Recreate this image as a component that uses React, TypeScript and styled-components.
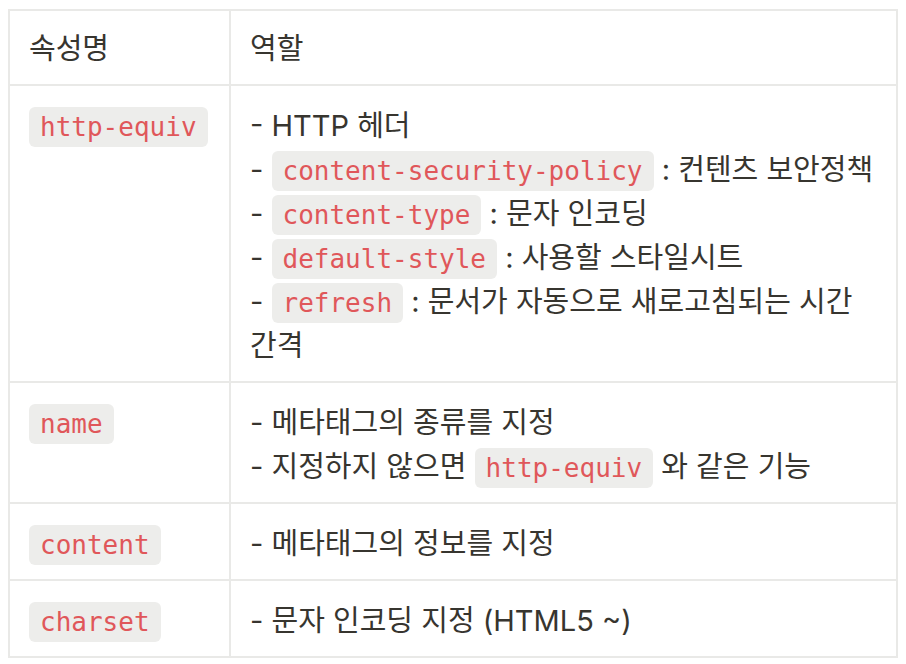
import React from "react";
import styled, { createGlobalStyle } from "styled-components";

const Global = createGlobalStyle`
  html, body { margin: 0; padding: 0; background: #ffffff; }
  body {
    padding: 9px 10px 0 8px;
    font-family: "Inter", "Noto Sans CJK KR", sans-serif;
    color: #37352f;
  }
`;

const Table = styled.table`
  border-collapse: collapse;
  width: 888px;
  table-layout: fixed;
  font-size: 29px;
  line-height: 44px;
`;

const Col = styled.col<{ $w: number }>`
  width: ${(p) => p.$w}px;
`;

const Cell = styled.td`
  border: 2px solid #e9e9e7;
  padding: 18px 19px 13px 19px;
  vertical-align: top;
  text-align: left;
  font-weight: 400;
  word-break: keep-all;
`;

const HeadCell = styled(Cell).attrs({ as: "th" })`
  padding-top: 16px;
  padding-bottom: 13px;
`;

const Code = styled.code`
  font-family: "DejaVu Sans Mono", "Liberation Mono", monospace;
  font-size: 26px;
  line-height: 30px;
  color: #e0575a;
  background: rgba(135, 131, 120, 0.15);
  border-radius: 6px;
  padding: 5px 11px;
`;

const Line = styled.div``;

const rows: { name: string; lines: React.ReactNode[] }[] = [
  {
    name: "http-equiv",
    lines: [
      "- HTTP 헤더",
      <>
        - <Code>content-security-policy</Code> : 컨텐츠 보안정책
      </>,
      <>
        - <Code>content-type</Code> : 문자 인코딩
      </>,
      <>
        - <Code>default-style</Code> : 사용할 스타일시트
      </>,
      <>
        - <Code>refresh</Code> : 문서가 자동으로 새로고침되는 시간 간격
      </>,
    ],
  },
  {
    name: "name",
    lines: [
      "- 메타태그의 종류를 지정",
      <>
        - 지정하지 않으면 <Code>http-equiv</Code> 와 같은 기능
      </>,
    ],
  },
  { name: "content", lines: ["- 메타태그의 정보를 지정"] },
  { name: "charset", lines: ["- 문자 인코딩 지정 (HTML5 ~)"] },
];

export default function App() {
  return (
    <>
      <Global />
      <Table>
        <colgroup>
          <Col $w={221} />
          <Col $w={667} />
        </colgroup>
        <thead>
          <tr>
            <HeadCell>속성명</HeadCell>
            <HeadCell>역할</HeadCell>
          </tr>
        </thead>
        <tbody>
          {rows.map((r) => (
            <tr key={r.name}>
              <Cell>
                <Code>{r.name}</Code>
              </Cell>
              <Cell>
                {r.lines.map((l, i) => (
                  <Line key={i}>{l}</Line>
                ))}
              </Cell>
            </tr>
          ))}
        </tbody>
      </Table>
    </>
  );
}
